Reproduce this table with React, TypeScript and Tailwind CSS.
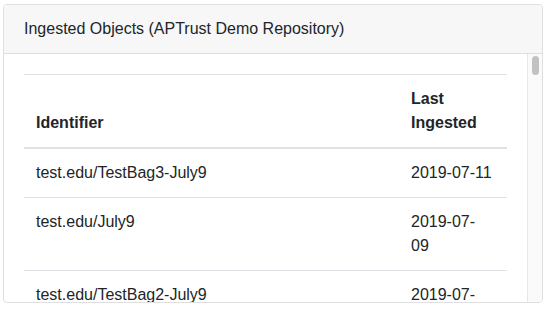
const rows = [
  { id: 'test.edu/TestBag3-July9', date: ['2019-07-11'] },
  { id: 'test.edu/July9', date: ['2019-07-', '09'] },
  { id: 'test.edu/TestBag2-July9', date: ['2019-07-', '09'] },
]

export default function App() {
  return (
    <div className="pt-[4px] pl-[3px] bg-white font-['Liberation_Sans',Arial,sans-serif] text-[16px] leading-6 text-[#212529]">
      <div className="w-[540px] h-[299px] border border-[#dfdfdf] rounded flex flex-col overflow-hidden">
        {/* Header */}
        <div className="h-[49px] shrink-0 px-5 flex items-center bg-[#f7f7f7] border-b border-[#dfdfdf]">
          Ingested Objects (APTrust Demo Repository)
        </div>

        {/* Body */}
        <div className="flex-1 min-h-0 flex">
          <div className="flex-1 overflow-hidden p-5">
            <table className="w-[483px] table-fixed border-collapse">
              <colgroup>
                <col className="w-[375px]" />
                <col className="w-[108px]" />
              </colgroup>
              <thead>
                <tr>
                  <th className="text-left font-bold align-bottom p-3 border-t border-b-2 border-[#dee2e6]">Identifier</th>
                  <th className="text-left font-bold align-bottom p-3 border-t border-b-2 border-[#dee2e6]">Last Ingested</th>
                </tr>
              </thead>
              <tbody>
                {rows.map(r => (
                  <tr key={r.id}>
                    <td className="p-3 align-top border-b border-[#dee2e6]">{r.id}</td>
                    <td className="p-3 align-top border-b border-[#dee2e6]">
                      {r.date.map(d => (
                        <div key={d}>{d}</div>
                      ))}
                    </td>
                  </tr>
                ))}
              </tbody>
            </table>
          </div>

          {/* Scrollbar */}
          <div className="w-[15px] shrink-0 bg-[#fafafa] border-l border-[#e8e8e8] pt-[2px] flex justify-center">
            <div className="w-[7px] h-[19px] rounded-full bg-[#c2c2c2]" />
          </div>
        </div>
      </div>
    </div>
  )
}
